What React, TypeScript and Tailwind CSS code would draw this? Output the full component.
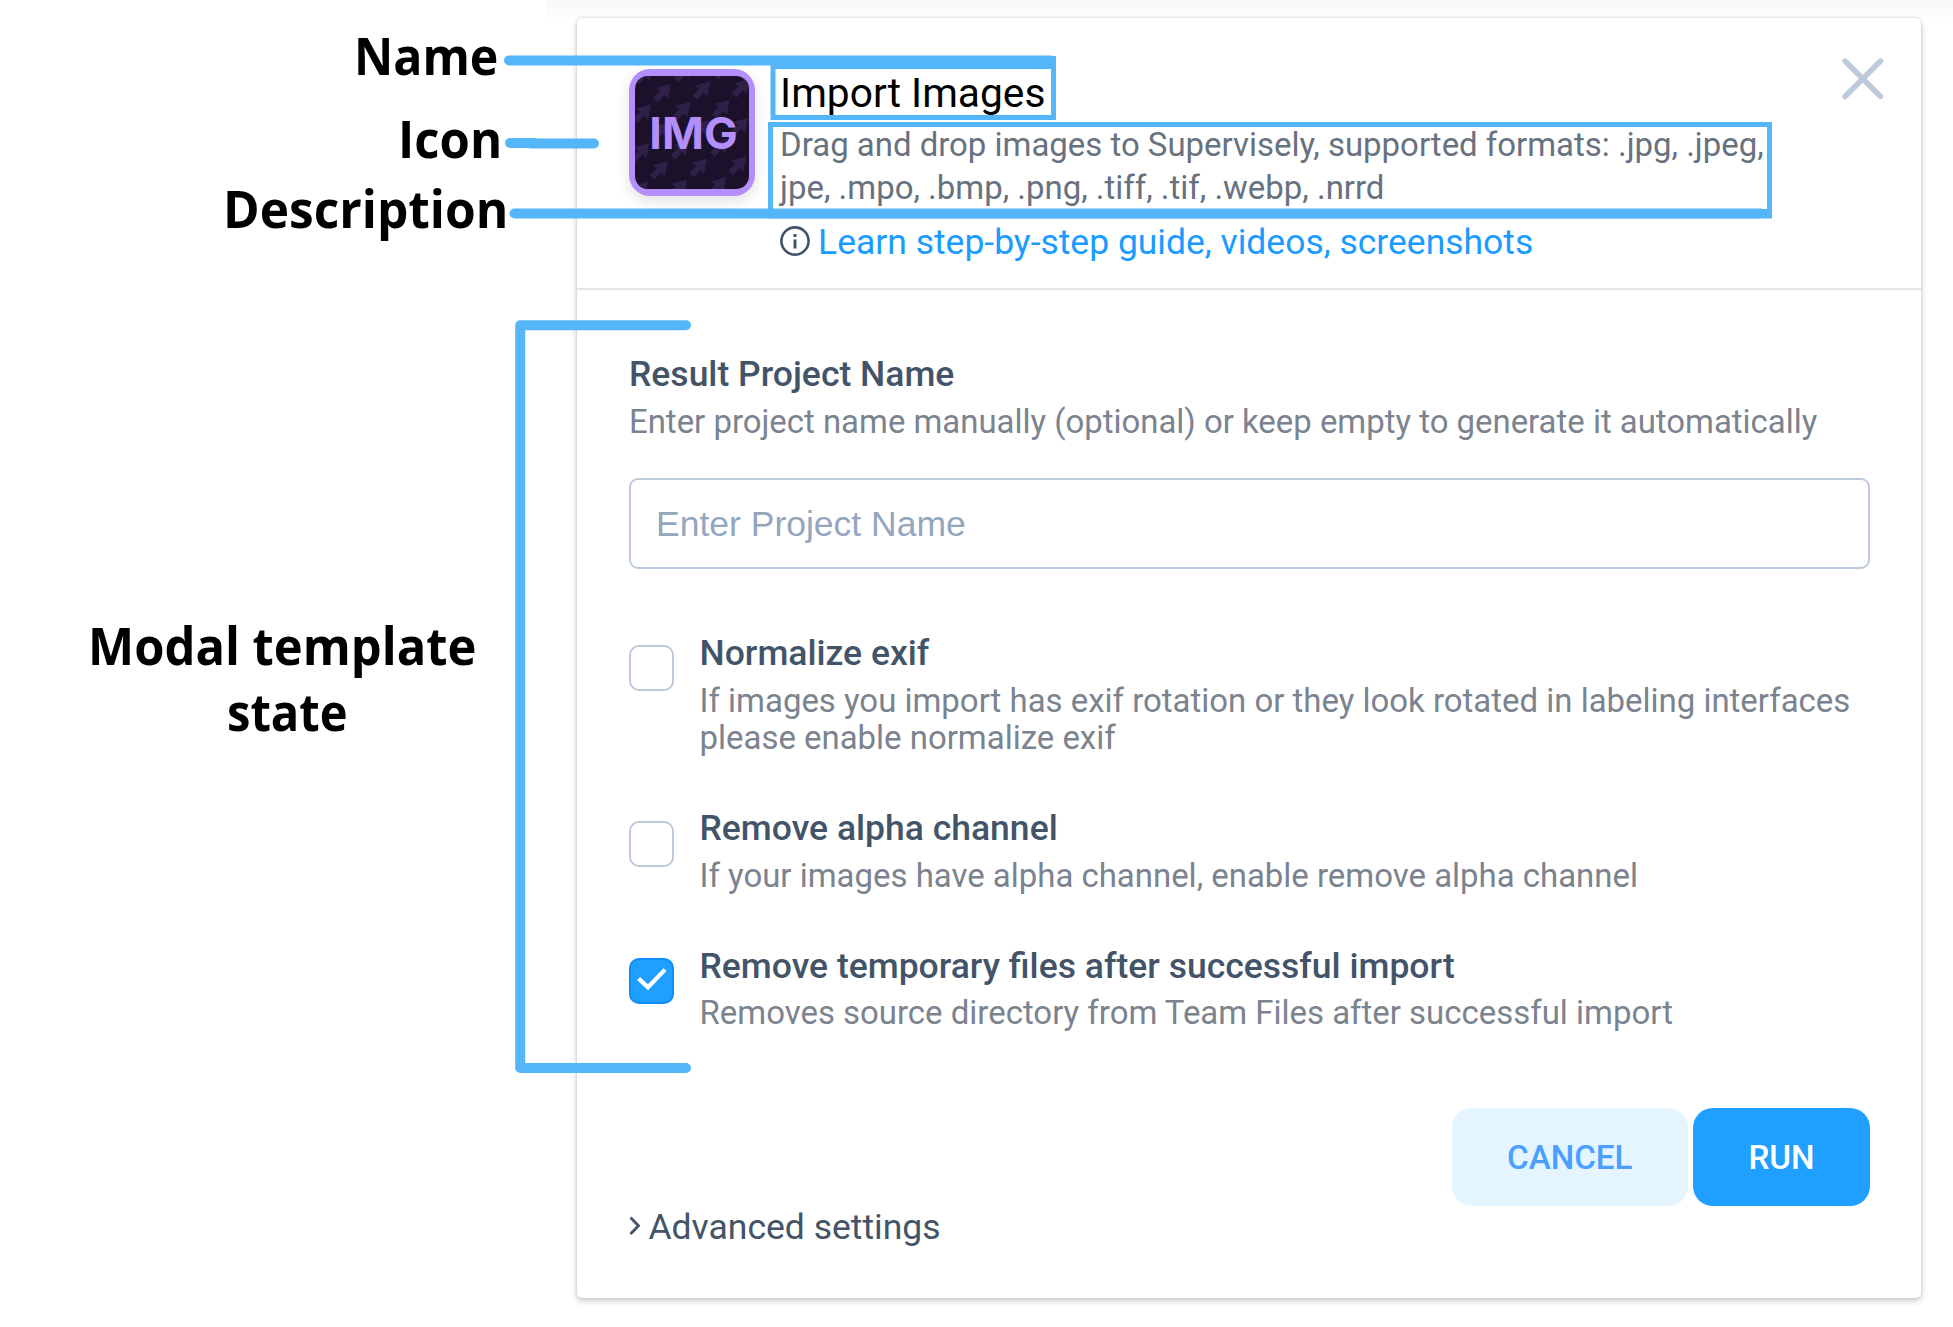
import type { ReactNode } from "react";

// Tips of the arrows that make up the app icon's background pattern.
const arrowTips: [number, number][] = [];
for (let row = -1; row < 4; row++) {
  for (let col = -1; col < 4; col++) {
    const x = 108 + col * 118 - row * 5;
    const y = 23 - col * 7 + row * 116;
    arrowTips.push([x, y], [x - 60, y + 62]);
  }
}

function AppIcon() {
  return (
    <div className="h-[126.6px] w-[126.6px] shrink-0 rounded-[21px] bg-[#b48ffc] p-[6.6px] shadow-[0_5px_14px_rgba(40,50,70,0.14)]">
      <svg viewBox="0 0 340 340" className="block h-full w-full rounded-[13px] bg-[#1c112b]">
        <g fill="#2f2048">
          {arrowTips.map(([x, y], i) => (
            <path key={i} transform={`translate(${x} ${y})`} d="M0 0 L-46 13 L-33 22 L-54 43 L-40 56 L-20 34 L-9 46 Z" />
          ))}
        </g>
        <text
          x="43"
          y="219"
          textLength="265"
          lengthAdjust="spacingAndGlyphs"
          fill="#b48ffc"
          className="font-['Inter'] text-[131px] font-bold"
        >
          IMG
        </text>
      </svg>
    </div>
  );
}

function Checkbox({ checked = false }: { checked?: boolean }) {
  return checked ? (
    <span className="mt-[13.4px] flex h-[46px] w-[45px] shrink-0 items-center justify-center rounded-[10px] border-2 border-[#0d8efb] bg-[#1f9fff]">
      <svg viewBox="0 0 41 42" className="h-full w-full" fill="none" stroke="#fff" strokeWidth="4.2">
        <path d="M7.6 18.6 L17 27.3 L34 9.6" />
      </svg>
    </span>
  ) : (
    <span className="mt-[13.4px] h-[46px] w-[45px] shrink-0 rounded-[10px] border-2 border-[#bccadb] bg-white" />
  );
}

function Option({ title, checked, children }: { title: string; checked?: boolean; children: ReactNode }) {
  return (
    <div className="flex gap-[25.5px]">
      <Checkbox checked={checked} />
      <div>
        <div className="text-[35.5px] leading-[42px] font-medium text-[#435469]">{title}</div>
        <div className="mt-[7.5px] text-[32.95px] leading-[37.3px] whitespace-nowrap text-[#7b838f]">{children}</div>
      </div>
    </div>
  );
}

function Labels() {
  return (
    <aside className="w-[577px] shrink-0 pt-[22px] font-['Open_Sans'] text-[52.5px] leading-[66px] font-bold whitespace-nowrap text-black">
      <div className="ml-[354.3px] w-max origin-left scale-x-[0.92]">Name</div>
      <div className="mt-[16.7px] ml-[397.5px] w-max origin-left scale-x-[0.935]">Icon</div>
      <div className="mt-[4.3px] ml-[222.7px] w-max origin-left scale-x-[0.945]">Description</div>
      <div className="mt-[371px] ml-[88px] w-max origin-left scale-x-[0.932]">Modal template</div>
      <div className="ml-[227.3px] w-max origin-left scale-x-[0.897]">state</div>
    </aside>
  );
}

// Callout strokes drawn over the dialog.
function Callouts() {
  return (
    <svg
      viewBox="0 0 1953 1327"
      className="pointer-events-none absolute inset-0 h-[1327px] w-[1953px]"
      fill="none"
      stroke="#54b6f9"
      strokeLinecap="round"
    >
      <path d="M509 60.5 H1050" strokeWidth="10" />
      <path d="M770.5 56 H1056 V120 H770.5 Z M775.5 69 V115 H1051 V69 Z" fill="#54b6f9" fillRule="evenodd" stroke="none" />
      <path d="M510 143 H535 M530 143.5 H594" strokeWidth="10" />
      <path d="M514.5 213.5 H1760" strokeWidth="10" />
      <path d="M768 122 H1772 V218.5 H768 Z M773 127 V209 H1767 V127 Z" fill="#54b6f9" fillRule="evenodd" stroke="none" />
      <path d="M686 325.3 H520.2 V1068 H686" strokeWidth="10" strokeLinejoin="round" />
    </svg>
  );
}

export default function App() {
  return (
    <div className="relative flex h-[1327px] w-[1953px] overflow-hidden bg-white font-['Roboto']">
      <div className="absolute top-0 right-0 left-[546px] h-[18px] bg-gradient-to-b from-[#f9f9f9] to-[#fdfdfd]" />
      <Labels />

      <main className="relative mt-[18px] h-[1280px] w-[1344px] rounded-[5px] bg-white shadow-[0_0_3px_rgba(0,0,0,0.16),0_3px_7px_rgba(0,0,0,0.2)]">
        <header className="flex h-[272px] border-b-2 border-[#e1e6ed] pt-[51px] pl-[51.5px]">
          <AppIcon />
          <div className="ml-[25px] flex-1 pt-[1.8px]">
            <h1 className="text-[40.7px] leading-[44px] text-black">Import Images</h1>
            <p className="mt-[9.6px] text-[32.95px] leading-[42.5px] whitespace-nowrap text-[#68727f]">
              Drag and drop images to Supervisely, supported formats: .jpg, .jpeg,
              <br />
              jpe, .mpo, .bmp, .png, .tiff, .tif, .webp, .nrrd
            </p>
            <a className="mt-[11px] flex items-center text-[35.47px] leading-[44px] whitespace-nowrap text-[#1a9bff]">
              <svg viewBox="0 0 32 32" className="mr-[6.8px] -ml-[0.8px] h-8 w-8 shrink-0" fill="none" stroke="#435469" strokeWidth="2.6">
                <circle cx="16" cy="15" r="13.6" />
                <path d="M16 13.6 V22.4 M16 8 V11" strokeWidth="3" />
              </svg>
              Learn step-by-step guide, videos, screenshots
            </a>
          </div>
          <svg viewBox="0 0 44 44" className="-mt-[12px] mr-[36.5px] h-11 w-11" stroke="#bccadb" strokeWidth="5.4" strokeLinecap="round">
            <path d="M4 4 L39.5 39.5 M39.5 4 L4 39.5" />
          </svg>
        </header>

        <section className="pr-[51px] pl-[52px] pt-[63px]">
          <h2 className="text-[35.5px] leading-[42px] font-medium text-[#435469]">Result Project Name</h2>
          <p className="mt-[7.8px] text-[32.92px] leading-[37.3px] whitespace-nowrap text-[#7b838f]">
            Enter project name manually (optional) or keep empty to generate it automatically
          </p>
          <div className="mt-[38px] flex h-[91px] items-center rounded-[9px] border-2 border-[#bccadb] pt-[2px] pl-[25px] font-['Liberation_Sans'] text-[35.5px] text-[#94a6bf]">
            Enter Project Name
          </div>

          <div className="mt-[63px] flex flex-col gap-[51px]">
            <Option title="Normalize exif">
              If images you import has exif rotation or they look rotated in labeling interfaces
              <br />
              please enable normalize exif
            </Option>
            <Option title="Remove alpha channel">If your images have alpha channel, enable remove alpha channel</Option>
            <Option title="Remove temporary files after successful import" checked>
              Removes source directory from Team Files after successful import
            </Option>
          </div>

          <div className="mt-[76px] flex justify-end gap-[5px] text-[33.2px] font-medium">
            <button className="h-[98.5px] w-[236.5px] rounded-[20px] bg-[#e4f5ff] pt-[1px] text-[#4a9fff]">CANCEL</button>
            <button className="h-[98.5px] w-[177px] rounded-[20px] bg-[#1f9fff] pt-[1px] text-white">RUN</button>
          </div>
          <div className="flex items-center text-[35.5px] leading-[42px] text-[#435469]">
            <svg viewBox="0 0 12 20" className="mt-[-2px] mr-[7.4px] h-5 w-3" fill="none" stroke="#435469" strokeWidth="2.8">
              <path d="M1.5 1.5 L9.5 9.8 L1.5 18" />
            </svg>
            Advanced settings
          </div>
        </section>
      </main>

      <Callouts />
    </div>
  );
}
